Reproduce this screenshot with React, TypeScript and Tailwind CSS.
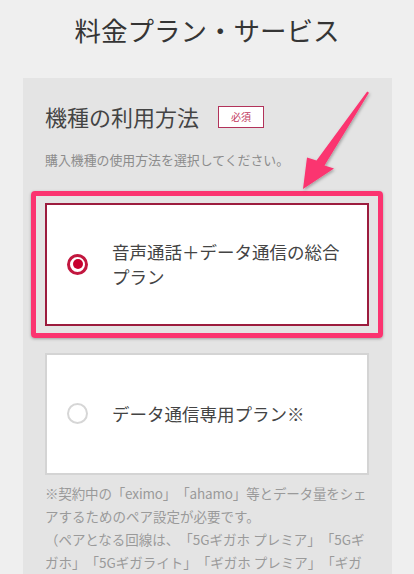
import React from "react";

function Radio({ checked }: { checked: boolean }) {
  if (checked) {
    return (
      <span className="flex h-[21px] w-[21px] shrink-0 items-center justify-center rounded-full border-[3px] border-[#c2173f] bg-white">
        <span className="h-[10px] w-[10px] rounded-full bg-[#c8002f]" />
      </span>
    );
  }
  return <span className="h-[21px] w-[21px] shrink-0 rounded-full border-2 border-[#d6d6d6] bg-white" />;
}

function Arrow() {
  return (
    <svg
      className="pointer-events-none absolute left-0 top-0 h-[574px] w-[414px]"
      viewBox="0 0 414 574"
    >
      <defs>
        <filter id="arrowShadow" x="-20%" y="-20%" width="140%" height="140%">
          <feDropShadow dx="1" dy="1.5" stdDeviation="1.5" floodColor="#000" floodOpacity="0.3" />
        </filter>
      </defs>
      <polygon
        points="367.2,91.4 369,92.8 324.5,165.5 334,168.5 303,189 307,157.5 316.5,160.5"
        fill="#fb3470"
        filter="url(#arrowShadow)"
      />
    </svg>
  );
}

export default function App() {
  return (
    <div className="relative h-[574px] w-full overflow-hidden bg-[#efefef] font-['Noto_Sans_CJK_JP',sans-serif] [text-spacing-trim:space-all]">
      <h1 className="h-[78px] pt-[10px] text-center text-[26.5px] leading-[40px] text-[#353535]">
        料金プラン・サービス
      </h1>

      <section className="ml-[23px] min-h-[520px] w-[369px] bg-[#e4e4e4] pl-[22px] pr-[23px] pt-[22px]">
        <div className="flex h-[33px] items-center">
          <h2 className="text-[22px] leading-[33px] text-[#444]">機種の利用方法</h2>
          <span className="ml-[19px] flex h-[22px] w-[46px] items-center justify-center border-[1.5px] border-[#b2325a] bg-white text-[10px] text-[#c23a60]">
            必須
          </span>
        </div>
        <p className="mt-[17px] text-[12.9px] leading-[19px] text-[#8c8c8c]">
          購入機種の使用方法を選択してください。
        </p>

        <div className="-mx-[14px] mt-[21.5px] rounded-[4px] border-[5px] border-[#fb3470] px-[9px] py-[7px] shadow-[0_1px_3px_rgba(0,0,0,0.3)]">
          <label className="flex h-[123px] items-center gap-[24px] border-2 border-[#9c1c3e] bg-white pl-[20px] pr-[20px]">
            <Radio checked />
            <span className="text-[17.5px] leading-[25px] text-[#444]">音声通話＋データ通信の総合プラン</span>
          </label>
        </div>

        <label className="mt-[15px] flex h-[122px] items-center gap-[24px] border-2 border-[#d4d4d4] bg-white pl-[20px] pr-[20px]">
          <Radio checked={false} />
          <span className="text-[17.5px] leading-[25px] text-[#444]">データ通信専用プラン※</span>
        </label>

        <p className="mt-[7.5px] text-[13.5px] leading-[23px] text-[#9a9a9a]">
          <span className="whitespace-nowrap tracking-[-0.15px]">※契約中の「eximo」「ahamo」等とデータ量をシェ</span>
          <br />
          アするためのペア設定が必要です。
          <br />
          （ペアとなる回線は、「5Gギガホ プレミア」「5Gギガホ」「5Gギガライト」「ギガホ プレミア」「ギガホ」「ギガライト」「ギガホ（2019年9月30日以前）」）
        </p>
      </section>

      <Arrow />
    </div>
  );
}
